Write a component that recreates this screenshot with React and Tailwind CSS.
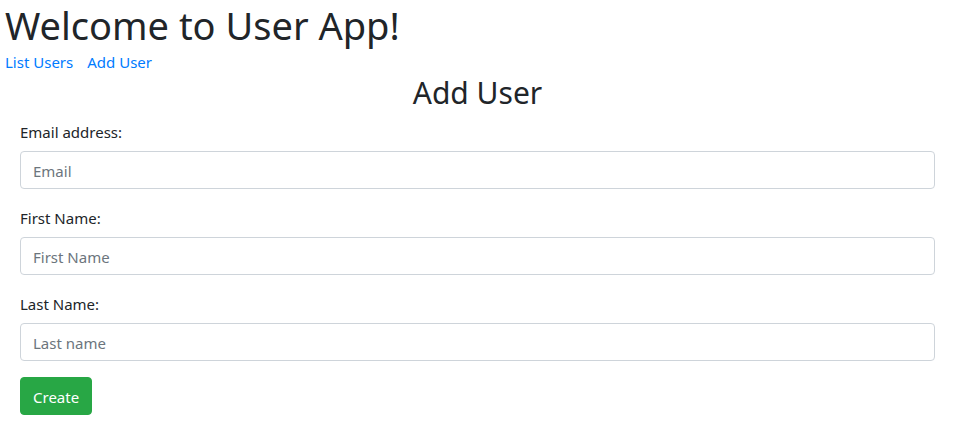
import { useState } from 'react'

const fields = [
  { id: 'email', label: 'Email address:', placeholder: 'Email', type: 'email' },
  { id: 'firstName', label: 'First Name:', placeholder: 'First Name', type: 'text' },
  { id: 'lastName', label: 'Last Name:', placeholder: 'Last name', type: 'text' },
]

const App = () => {
  const [form, setForm] = useState({ email: '', firstName: '', lastName: '' })

  return (
    <div className="min-h-screen bg-white text-[#212529] font-['Noto_Sans',sans-serif] text-[15px] leading-6">
      {/* Header */}
      <div className="px-[5px]">
        <h1 className="text-[38px] leading-[50px] font-normal">Welcome to User App!</h1>
        <nav className="flex gap-[14px] text-[#007bff]">
          <a href="#" className="hover:underline">List Users</a>
          <a href="#" className="hover:underline">Add User</a>
        </nav>
      </div>

      {/* Form */}
      <div className="pl-[20px] pr-[18px]">
        <h2 className="text-center text-[30px] pt-[1px] leading-[36px] font-normal mb-2">Add User</h2>
        <form onSubmit={(e) => e.preventDefault()}>
          {fields.map((f) => (
            <div key={f.id} className="mb-4">
              <label htmlFor={f.id} className="block mb-2 pt-[2px] leading-[22px]">{f.label}</label>
              <input
                id={f.id}
                type={f.type}
                placeholder={f.placeholder}
                value={form[f.id]}
                onChange={(e) => setForm({ ...form, [f.id]: e.target.value })}
                className="block w-full h-[38px] px-3 pt-[7px] pb-[5px] border border-[#ced4da] rounded-[4px] text-[#495057] placeholder:text-[#6c757d] outline-none focus:border-[#80bdff]"
              />
            </div>
          ))}
          <button
            type="submit"
            className="h-[38px] px-3 pt-[1px] bg-[#28a745] text-white rounded-[4px] border border-[#28a745]"
          >
            Create
          </button>
        </form>
      </div>
    </div>
  )
}

export default App
